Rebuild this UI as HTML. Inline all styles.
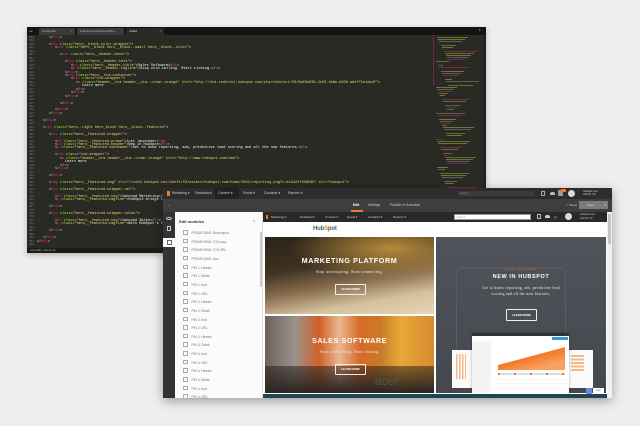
<!DOCTYPE html>
<html><head><meta charset="utf-8"><style>
*{margin:0;padding:0;box-sizing:border-box}
body{width:640px;height:426px;background:#eeeeee;position:relative;overflow:hidden;font-family:"Liberation Sans",sans-serif}
.abs{position:absolute}
#ed{left:27px;top:27px;width:459px;height:226px;background:#2a2a24;box-shadow:0 2px 6px rgba(0,0,0,.25);overflow:hidden}
#tabs{left:0;top:0;width:459px;height:8px;background:#141414}
.tab{top:1px;height:7px;background:#3a3a3a;border-radius:2px 2px 0 0;font-size:2.5px;color:#bbb;padding:2px 3px;line-height:3px}
.cl{position:absolute;font-family:"Liberation Mono",monospace;font-size:3.6px;line-height:4px;white-space:pre;color:#f8f8f2}
.ln{position:absolute;left:2px;font-family:"Liberation Mono",monospace;font-size:2.8px;color:#777;line-height:4px}
.t{color:#f92672}.a{color:#a6e22e}.s{color:#e6db74}
#mm{left:405px;top:8px;width:54px;height:210px}
.mb{position:absolute;height:0.7px}
#status{left:0;top:221px;width:459px;height:5px;background:#1c1c1a;font-size:2.6px;color:#aaa;padding:1px 3px}
#br{left:163px;top:188px;width:449px;height:210px;background:#fff;box-shadow:0 3px 10px rgba(0,0,0,.35);overflow:hidden}
.nav{font-size:3.4px;color:#ccc;position:absolute;top:0;line-height:11px}
#bar1{left:0;top:0;width:449px;height:11px;background:#2d2d2d}
#bar2{left:0;top:11px;width:449px;height:13px;background:#3e3e3e}
#icons{left:0;top:24px;width:12px;height:186px;background:#333}
#panel{left:12px;top:24px;width:88px;height:186px;background:#fbfbfb;border-right:1px solid #ddd}
.item{position:absolute;left:8px;font-size:3.2px;color:#777}
.item:before{content:"";display:inline-block;width:2.5px;height:2.5px;border:0.4px solid #aaa;margin-right:4px;vertical-align:-0.3px}
#cont{left:100px;top:24px;width:344px;height:186px;background:#fff}
#inav{left:0;top:0;width:344px;height:10px;background:#292929}
.tile{position:absolute;overflow:hidden}
.h1{position:absolute;width:100%;text-align:center;color:#fff;font-weight:bold;letter-spacing:.6px}
.tag{position:absolute;width:100%;text-align:center;color:#eee;font-family:"Liberation Serif",serif;font-size:4px;letter-spacing:.3px}
.btn{position:absolute;border:1px solid #eee;color:#fff;font-size:2.8px;font-weight:bold;text-align:center;line-height:9px;border-radius:1px}
</style></head><body>

<div id="ed" class="abs">
 <div id="tabs" class="abs">
  <div class="abs" style="left:2px;top:2px;font-size:3px;color:#aaa">◂ ▸</div>
  <div class="tab abs" style="left:12px;width:36px">Find Results<span style="float:right">×</span></div>
  <div class="tab abs" style="left:50px;width:47px">index-layout-homepage-2015 ●</div>
  <div class="tab abs" style="left:99px;width:38px;background:#2a2a24;color:#ddd">untitled<span style="float:right">×</span></div>
  <div class="abs" style="left:452px;top:1px;font-size:3px;color:#aaa">▾</div>
 </div>
 <div id="code"></div>
 <div id="mm" class="abs"></div>
 <div class="abs" style="left:456px;top:8px;width:3px;height:213px;background:#222"></div>
 <div id="status" class="abs">Line 1082, Column 13</div>
</div>

<div id="br" class="abs">
 <div id="bar1" class="abs">
  <div class="abs" style="left:4px;top:3px;width:3px;height:5px;background:#f57722"></div>
  <div class="nav" style="left:9px">Marketing ▾</div>
  <div class="nav" style="left:32px">Dashboard</div>
  <div class="abs" style="left:52px;top:0;width:24px;height:11px;background:#222"></div>
  <div class="nav" style="left:55px">Content ▾</div>
  <div class="nav" style="left:80px">Social ▾</div>
  <div class="nav" style="left:101px">Contacts ▾</div>
  <div class="nav" style="left:125px">Reports ▾</div>
  <div class="abs" style="left:295px;top:3px;width:76px;height:5px;background:#3b3b3b;font-size:2.6px;color:#888;padding-left:2px;line-height:5px">Search</div>
  <div class="abs" style="left:378px;top:3px;width:4px;height:5px;border:1px solid #aaa"></div>
  <div class="abs" style="left:387px;top:4px;width:5px;height:3px;background:#bbb;border-radius:2px 2px 0 0"></div>
  <div class="abs" style="left:395px;top:2px;width:5px;height:6px;background:#999"></div>
  <div class="abs" style="left:398px;top:1px;width:5px;height:3px;background:#f57722"></div>
  <div class="abs" style="left:405px;top:2px;width:7px;height:7px;border-radius:50%;background:#ddd"></div>
  <div class="abs" style="left:420px;top:2px;font-size:2.6px;color:#ccc;line-height:3px">hubspot.com<br>Hub ID: 53</div>
 </div>
 <div id="bar2" class="abs">
  <div class="abs" style="left:4px;top:3px;font-size:4px;color:#ccc">←</div>
  <div class="nav" style="left:190px;line-height:13px;color:#fff;font-weight:bold">Edit</div>
  <div class="abs" style="left:188px;top:11px;width:12px;height:2px;background:#f57722"></div>
  <div class="nav" style="left:205px;line-height:13px">Settings</div>
  <div class="nav" style="left:227px;line-height:13px">Publish or Schedule</div>
  <div class="nav" style="left:403px;line-height:13px;font-size:2.8px">✓ Saved</div>
  <div class="abs" style="left:416px;top:2px;width:29px;height:8px;background:#7b7b7b;font-size:3px;color:#ddd;line-height:8px;padding-left:8px">Save <span style="float:right;margin-right:2px">▾</span></div>
 </div>
 <div id="icons" class="abs">
  <div class="abs" style="left:3px;top:5px;width:6px;height:3px;border:1px solid #ccc;border-radius:50%"></div>
  <div class="abs" style="left:4px;top:14px;width:4px;height:5px;border:1px solid #ccc"></div>
  <div class="abs" style="left:0;top:26px;width:13px;height:9px;background:#fbfbfb"></div>
  <div class="abs" style="left:4px;top:28px;width:5px;height:5px;border:1px solid #666"></div>
 </div>
 <div id="panel" class="abs">
  <div class="abs" style="left:4px;top:7px;font-size:4px;color:#333;font-weight:bold">Edit modules</div>
  <div class="abs" style="left:78px;top:6px;font-size:4px;color:#666">×</div>
  <div class="abs" style="left:85px;top:20px;width:2px;height:55px;background:#ccc"></div>
  <div id="items"></div>
 </div>
 <div id="cont" class="abs">
  <div id="inav" class="abs">
   <div class="abs" style="left:3px;top:3px;width:2px;height:4px;background:#f57722"></div>
   <div class="nav" style="left:8px;line-height:10px;font-size:3px">Marketing ▾</div>
   <div class="nav" style="left:37px;line-height:10px;font-size:3px">Dashboard</div>
   <div class="nav" style="left:62px;line-height:10px;font-size:3px">Content ▾</div>
   <div class="nav" style="left:84px;line-height:10px;font-size:3px">Social ▾</div>
   <div class="nav" style="left:105px;line-height:10px;font-size:3px">Contacts ▾</div>
   <div class="nav" style="left:130px;line-height:10px;font-size:3px">Reports ▾</div>
   <div class="abs" style="left:191px;top:2px;width:77px;height:6px;background:#fff;border:0.5px solid #999;font-size:2.6px;color:#aaa;line-height:5px;padding-left:2px">Search</div>
   <div class="abs" style="left:274px;top:2px;width:4px;height:5px;border:1px solid #bbb"></div>
   <div class="abs" style="left:282px;top:3px;width:5px;height:3px;background:#ccc;border-radius:2px 2px 0 0"></div>
   <div class="abs" style="left:291px;top:3px;font-size:3px;color:#ccc">[•]</div>
   <div class="abs" style="left:302px;top:1px;width:7px;height:7px;border-radius:50%;background:#ddd"></div>
   <div class="abs" style="left:317px;top:1px;font-size:2.6px;color:#ccc;line-height:3.5px">hubspot.com<br>Hub ID: 53</div>
  </div>
  <div class="abs" style="left:50px;top:14px;font-size:6px;color:#4a5a6a;font-weight:bold;letter-spacing:-.2px">Hub<span style="color:#f57722">S</span>pot</div>
  <div class="tile" style="left:2px;top:25px;width:169px;height:77px;background:radial-gradient(ellipse 60% 40% at 75% 15%,#b88a3a,transparent),linear-gradient(170deg,#2a2418 0%,#3e3220 35%,#8a7050 58%,#d4c09c 78%,#e6d6b8 100%)">
   <div class="h1" style="top:19px;font-size:7.2px">MARKETING PLATFORM</div>
   <div class="tag" style="top:32px">Stop interrupting. Start connecting.</div>
   <div class="btn" style="left:70px;top:47px;width:31px;height:11px">LEARN MORE</div>
  </div>
  <div class="tile" style="left:2px;top:104px;width:169px;height:77px;background:linear-gradient(90deg,#6a625c 0%,#9a928a 18%,#d06028 32%,#e8b890 44%,#d86a28 56%,#c87a28 68%,#e8a838 80%,#d88a30 100%)">
   <div class="abs" style="left:0;top:50px;width:169px;height:27px;background:linear-gradient(180deg,rgba(40,30,25,.5),#2a2522)"></div>
   <div class="abs" style="left:110px;top:58px;font-size:12px;color:#555;font-style:italic">acer</div>
   <div class="h1" style="top:20px;font-size:7.2px">SALES SOFTWARE</div>
   <div class="tag" style="top:33px">Stop cold calling. Start closing.</div>
   <div class="btn" style="left:70px;top:48px;width:31px;height:11px">LEARN MORE</div>
  </div>
  <div class="tile" style="left:173px;top:25px;width:170px;height:156px;background:linear-gradient(180deg,#50535a,#45484e)">
   <div class="abs" style="left:20px;top:30px;width:110px;height:90px;border:1px solid #5a5d63;border-radius:6px"></div>
   <div class="h1" style="top:30px;font-size:3px;color:#f57722;font-weight:normal">JUST LAUNCHED</div>
   <div class="h1" style="top:37px;font-size:5.5px">NEW IN HUBSPOT</div>
   <div class="tag" style="top:48px;font-size:3.8px;line-height:6px">Get to know reporting, ads, predictive lead<br>scoring and all the new features.</div>
   <div class="btn" style="left:70px;top:72px;width:31px;height:12px;line-height:10px">LEARN MORE</div>
   <div class="abs" style="left:16px;top:113px;width:24px;height:38px;background:#fafafa"></div>
   <div class="abs" style="left:20px;top:117px;width:10px;height:25px;background:repeating-linear-gradient(90deg,#f6b88a 0 1.5px,transparent 1.5px 3px)"></div>
   <div class="abs" style="left:131px;top:113px;width:26px;height:38px;background:#fafafa"></div>
   <div class="abs" style="left:135px;top:118px;width:13px;height:16px;background:repeating-linear-gradient(180deg,#f6b88a 0 2px,transparent 2px 3.5px)"></div>
   <div class="abs" style="left:36px;top:96px;width:97px;height:60px;background:#fff;box-shadow:0 0 3px rgba(0,0,0,.3)">
    <div class="abs" style="left:0;top:0;width:97px;height:3px;background:#333"></div>
    <div class="abs" style="left:80px;top:4px;width:16px;height:3px;background:#2e9ad6"></div>
    <div class="abs" style="left:0;top:8px;width:19px;height:52px;background:#f4f4f4"></div>
    <div class="abs" style="left:26px;top:13px;width:67px;height:24px;background:linear-gradient(165deg,transparent 45%,#f57722 46%,#f8a262 80%)"></div>
    <div class="abs" style="left:26px;top:40px;width:67px;height:2px;background:repeating-linear-gradient(90deg,#f57722 0 2px,#ddd 2px 16px)"></div>
    <div class="abs" style="left:22px;top:46px;width:72px;height:12px;background:repeating-linear-gradient(180deg,#eee 0 .5px,transparent .5px 4px)"></div>
   </div>
  </div>
  <div class="abs" style="left:0;top:182px;width:344px;height:4px;background:#1e4550"></div>
  <div class="abs" style="left:323px;top:176px;width:6px;height:6px;background:#6b8fd6"></div>
  <div class="abs" style="left:330px;top:176px;width:11px;height:6px;background:#fff;font-size:2.4px;color:#3a7bd5;line-height:6px;text-align:center">Help</div>
 </div>
 <div class="abs" style="left:444px;top:24px;width:5px;height:186px;background:#f0f0f0"></div>
 <div class="abs" style="left:445px;top:26px;width:3px;height:30px;background:#c5c5c5"></div>
</div>

<script>
var L=[
[0,22,'&lt;/<span class=t>div</span>&gt;'],
[2,22,'&lt;<span class=t>div</span> <span class=a>class</span>=<span class=s>"hero__block-color-wrapper"</span>&gt;'],
[3,28,'&lt;<span class=t>div</span> <span class=a>class</span>=<span class=s>"hero__block hero__block--small hero__block--color"</span>&gt;'],
[5,33,'&lt;<span class=t>div</span> <span class=a>class</span>=<span class=s>"hero__header-inner"</span>&gt;'],
[7,38,'&lt;<span class=t>div</span> <span class=a>class</span>=<span class=s>"hero__header-text"</span>&gt;'],
[8,44,'&lt;<span class=t>h1</span> <span class=a>class</span>=<span class=s>"hero__header-title"</span>&gt;Sales Software&lt;/<span class=t>h1</span>&gt;'],
[9,44,'&lt;<span class=t>p</span> <span class=a>class</span>=<span class=s>"hero__header-tagline"</span>&gt;Stop cold calling. Start closing.&lt;/<span class=t>p</span>&gt;'],
[10,38,'&lt;/<span class=t>div</span>&gt;'],
[11,38,'&lt;<span class=t>div</span> <span class=a>class</span>=<span class=s>"hero__cta-container"</span>&gt;'],
[12,44,'&lt;<span class=t>div</span> <span class=a>class</span>=<span class=s>"cta-wrapper"</span>&gt;'],
[13,49,'&lt;<span class=t>a</span> <span class=a>class</span>=<span class=s>"header__cta header__cta--clear-orange"</span> <span class=a>href</span>=<span class=s>"http://cta-redirect.hubspot.com/cta/redirect/53/0a03a038-3c53-4b6e-b638-abef71e1da4f"</span>&gt;'],
[14,55,'Learn more'],
[15,49,'&lt;/<span class=t>a</span>&gt;'],
[16,44,'&lt;/<span class=t>div</span>&gt;'],
[17,38,'&lt;/<span class=t>div</span>&gt;'],
[19,33,'&lt;/<span class=t>div</span>&gt;'],
[21,28,'&lt;/<span class=t>div</span>&gt;'],
[22,22,'&lt;/<span class=t>div</span>&gt;'],
[24,16,'&lt;/<span class=t>div</span>&gt;'],
[26,16,'&lt;<span class=t>div</span> <span class=a>class</span>=<span class=s>"hero--right hero_block hero__block--featured"</span>&gt;'],
[28,22,'&lt;<span class=t>div</span> <span class=a>class</span>=<span class=s>"hero__featured-wrapper"</span>&gt;'],
[30,28,'&lt;<span class=t>h5</span> <span class=a>class</span>=<span class=s>"hero__featured-promo"</span>&gt;Just launched&lt;/<span class=t>h5</span>&gt;'],
[31,28,'&lt;<span class=t>h2</span> <span class=a>class</span>=<span class=s>"hero__featured-header"</span>&gt;New in HubSpot&lt;/<span class=t>h2</span>&gt;'],
[32,28,'&lt;<span class=t>p</span> <span class=a>class</span>=<span class=s>"hero__featured-subheader"</span>&gt;Get to know reporting, ads, predictive lead scoring and all the new features.&lt;/<span class=t>p</span>&gt;'],
[34,28,'&lt;<span class=t>div</span> <span class=a>class</span>=<span class=s>"cta-wrapper"</span>&gt;'],
[35,33,'&lt;<span class=t>a</span> <span class=a>class</span>=<span class=s>"header__cta header__cta--clear-orange"</span> <span class=a>href</span>=<span class=s>"http://www.hubspot.com/new"</span>&gt;'],
[36,38,'Learn more'],
[37,33,'&lt;/<span class=t>a</span>&gt;'],
[38,28,'&lt;/<span class=t>div</span>&gt;'],
[40,22,'&lt;/<span class=t>div</span>&gt;'],
[42,22,'&lt;<span class=t>img</span> <span class=a>class</span>=<span class=s>"hero__featured-img"</span> <span class=a>src</span>=<span class=s>"//cdn2.hubspot.net/hubfs/53/assets/hubspot.com/home/2015/reporting.png?t=1444217038045"</span> <span class=a>alt</span>=<span class=s>"hubspot"</span>&gt;'],
[44,22,'&lt;<span class=t>div</span> <span class=a>class</span>=<span class=s>"hero__featured-wrapper-xml"</span>&gt;'],
[46,28,'&lt;<span class=t>h3</span> <span class=a>class</span>=<span class=s>"hero__featured-tag"</span>&gt;Inbound Marketing&lt;/<span class=t>h3</span>&gt;'],
[47,28,'&lt;<span class=t>p</span> <span class=a>class</span>=<span class=s>"hero__featured-tagline"</span>&gt;HubSpot brings together all the tools you need'],
[49,22,'&lt;/<span class=t>div</span>&gt;'],
[51,22,'&lt;<span class=t>div</span> <span class=a>class</span>=<span class=s>"hero__featured-wrapper-sales"</span>&gt;'],
[53,28,'&lt;<span class=t>h3</span> <span class=a>class</span>=<span class=s>"hero__featured-tag"</span>&gt;Inbound Sales&lt;/<span class=t>h3</span>&gt;'],
[54,28,'&lt;<span class=t>p</span> <span class=a>class</span>=<span class=s>"hero__featured-tagline"</span>&gt;With HubSpot\'s free CRM and Sales tools'],
[56,22,'&lt;/<span class=t>div</span>&gt;'],
[58,16,'&lt;/<span class=t>div</span>&gt;'],
[59,10,'&lt;/<span class=t>div</span>&gt;']
];
var h='';
for(var i=0;i<61;i++){h+='<div class=ln style="top:'+(9+i*3.45)+'px">'+(398+i)+'</div>';}
L.forEach(function(r){h+='<div class=cl style="top:'+(9+r[0]*3.45)+'px;left:'+r[1]+'px">'+r[2]+'</div>';});
document.getElementById('code').innerHTML=h;
var m='',cs=['#f92672','#a6e22e','#e6db74','#aaa'];
for(var y=0;y<205;y+=2){var x=4+((y*7)%13),w=5+((y*13)%30);if((y*11)%17<4)continue;
m+='<div class=mb style="top:'+y+'px;left:'+x+'px;width:'+Math.min(w,48-x)+'px;background:'+cs[(y/2)%4|0]+';opacity:.4"></div>';}
m+='<div class=mb style="top:0;left:1px;width:1px;height:50px;background:#f92672;opacity:.35"></div>';
document.getElementById('mm').innerHTML=m;
var it=['PROMO BAR: Description','PROMO BAR: CTA copy','PROMO BAR: CTA URL','PROMO BAR: Icon'];
for(var n=1;n<=4;n++){['Header','Detail','Icon','URL'].forEach(function(k){it.push('PIN '+n+': '+k);});}
var s='';it.forEach(function(t,i){s+='<div class=item style="top:'+(18+i*8.65)+'px">'+t+'</div>';});
document.getElementById('items').innerHTML=s;
</script>
</body></html>
